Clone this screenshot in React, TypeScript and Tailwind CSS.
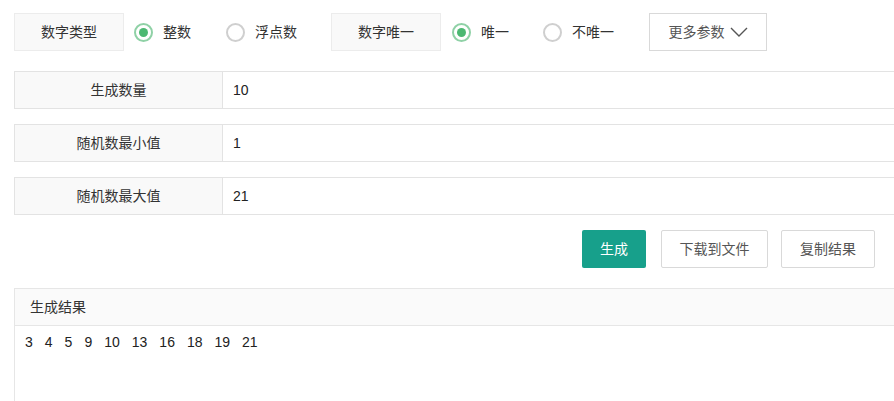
const font = { fontFamily: '"Liberation Sans", "Noto Sans CJK SC", sans-serif' }

function Radio({ checked, label, className }: { checked: boolean; label: string; className?: string }) {
  return (
    <label className={`flex items-center ${className ?? ''}`}>
      <span
        className={`flex h-[19px] w-[19px] items-center justify-center rounded-full border-2 ${
          checked ? 'border-[#8fd1a6]' : 'border-[#cfcfcf]'
        }`}
      >
        {checked && <span className="h-[9px] w-[9px] rounded-full bg-[#4cb872]" />}
      </span>
      <span className="ml-[10px] text-[14px] text-[#333]">{label}</span>
    </label>
  )
}

function FieldRow({ label, value }: { label: string; value: string }) {
  return (
    <div className="flex h-[38px] w-[900px] border border-[#e3e3e3]">
      <div className="flex w-[208px] items-center justify-center border-r border-[#e3e3e3] bg-[#f9f9f9] text-[14px] text-[#333]">
        {label}
      </div>
      <div className="flex flex-1 items-center pl-[10px] text-[14px] text-[#222]">{value}</div>
    </div>
  )
}

export default function App() {
  const results = [3, 4, 5, 9, 10, 13, 16, 18, 19, 21]

  return (
    <div className="h-[401px] w-[894px] overflow-hidden bg-white" style={font}>
      <div className="pl-[14px] pt-[13px]">
        {/* top options */}
        <div className="flex h-[38px] items-center">
          <div className="flex h-[38px] w-[110px] items-center justify-center border border-[#ececec] bg-[#f9f9f9] text-[14px] text-[#333]">
            数字类型
          </div>
          <Radio checked label="整数" className="ml-[10px]" />
          <Radio checked={false} label="浮点数" className="ml-[35px]" />
          <div className="ml-[34px] flex h-[38px] w-[110px] items-center justify-center border border-[#ececec] bg-[#f9f9f9] text-[14px] text-[#333]">
            数字唯一
          </div>
          <Radio checked label="唯一" className="ml-[11px]" />
          <Radio checked={false} label="不唯一" className="ml-[34px]" />
          <button className="ml-[35px] flex h-[38px] w-[118px] items-center justify-center border border-[#d9d9d9] bg-white text-[14px] text-[#555]">
            更多参数
            <svg className="ml-[5px]" width="18" height="10" viewBox="0 0 18 10" fill="none">
              <polyline points="1,1 9,9 17,1" stroke="#555" strokeWidth="1.4" />
            </svg>
          </button>
        </div>

        {/* fields */}
        <div className="mt-[20px] flex flex-col gap-[15px]">
          <FieldRow label="生成数量" value="10" />
          <FieldRow label="随机数最小值" value="1" />
          <FieldRow label="随机数最大值" value="21" />
        </div>

        {/* actions */}
        <div className="mt-[15px] flex justify-end pr-[19px]">
          <button className="h-[38px] w-[64px] rounded-[2px] bg-[#17a08b] text-[14px] text-white">生成</button>
          <button className="ml-[15px] h-[38px] w-[107px] rounded-[2px] border border-[#d9d9d9] bg-white text-[14px] text-[#555]">
            下载到文件
          </button>
          <button className="ml-[13px] h-[38px] w-[94px] rounded-[2px] border border-[#d9d9d9] bg-white text-[14px] text-[#555]">
            复制结果
          </button>
        </div>

        {/* result */}
        <div className="mt-[20px] w-[900px] border border-[#e6e6e6]">
          <div className="flex h-[37px] items-center border-b border-[#e6e6e6] bg-[#fafafa] pl-[15px] text-[14px] text-[#333]">
            生成结果
          </div>
          <div className="flex h-[120px] items-start gap-[12px] pl-[10px] pt-[6px] text-[14px] text-[#222]">
            {results.map((n) => (
              <span key={n}>{n}</span>
            ))}
          </div>
        </div>
      </div>
    </div>
  )
}
